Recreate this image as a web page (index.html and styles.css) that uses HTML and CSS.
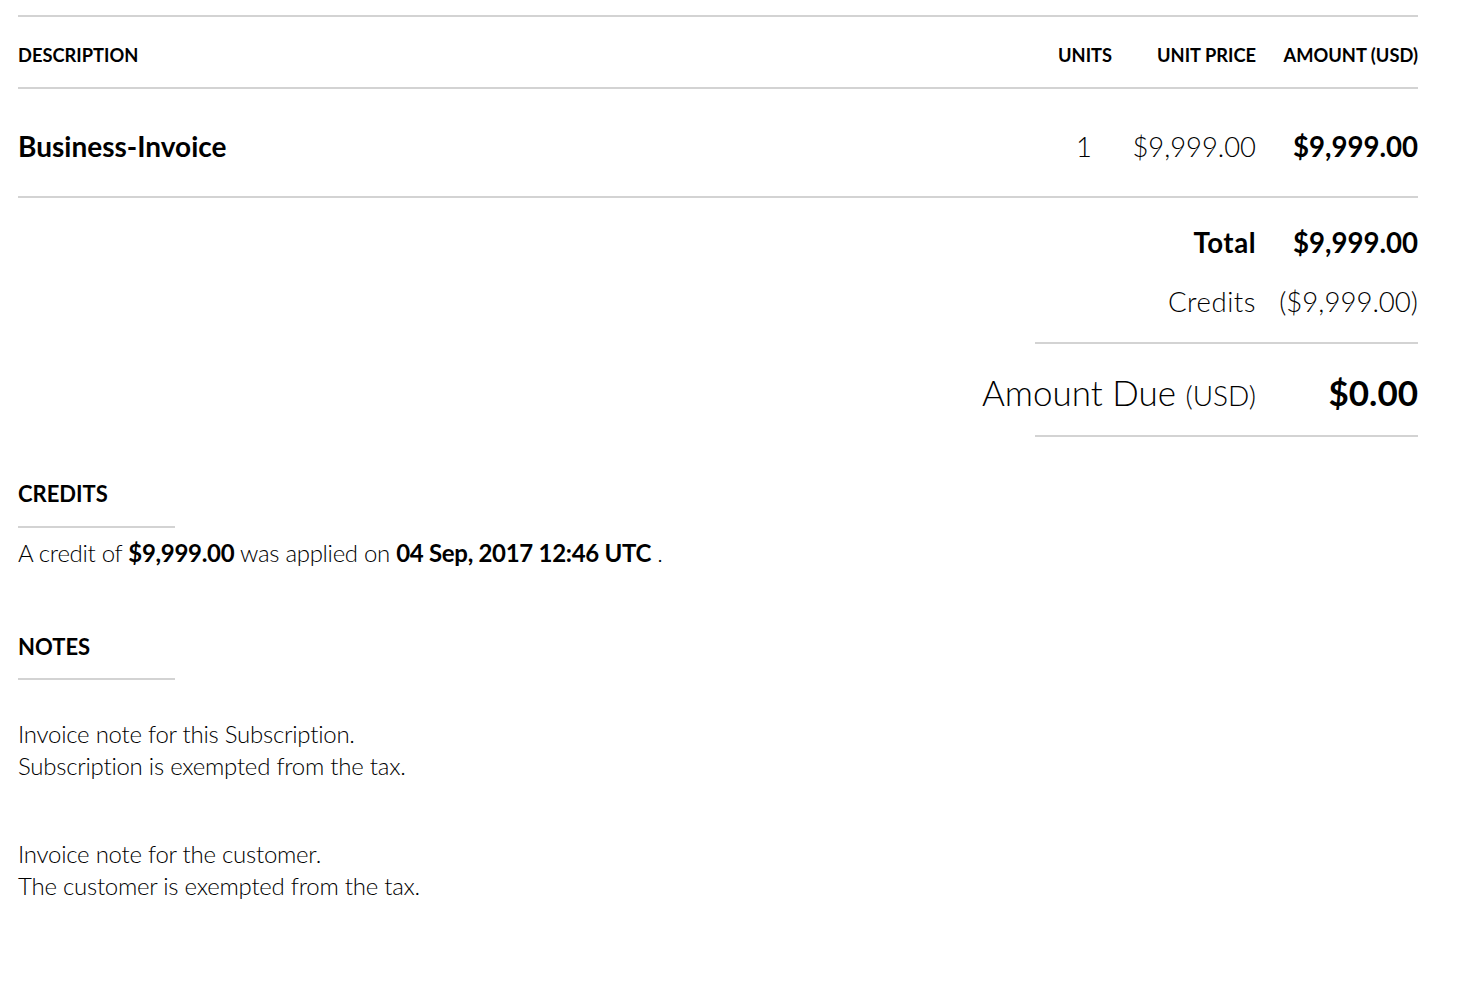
FILE: index.html
```html
<!DOCTYPE html>
<html lang="en">
<head>
<meta charset="utf-8">
<title>Invoice</title>
<link rel="stylesheet" href="styles.css">
</head>
<body>
<div class="invoice">
  <div class="items">
    <div class="items-head">
      <div class="c-desc">Description</div>
      <div class="c-units">Units</div>
      <div class="c-price">Unit Price</div>
      <div class="c-amount">Amount (USD)</div>
    </div>
    <div class="items-row">
      <div class="c-desc item-name">Business-Invoice</div>
      <div class="c-units light">1</div>
      <div class="c-price light">$9,999.00</div>
      <div class="c-amount strong">$9,999.00</div>
    </div>
  </div>

  <div class="totals">
    <div class="tot-row">
      <div class="tot-label strong">Total</div>
      <div class="tot-value strong">$9,999.00</div>
    </div>
    <div class="tot-row">
      <div class="tot-label light">Credits</div>
      <div class="tot-value light">($9,999.00)</div>
    </div>
    <div class="tot-divider"></div>
    <div class="tot-row due-row">
      <div class="tot-label due-label">Amount Due <span class="due-cur">(USD)</span></div>
      <div class="tot-value due-value">$0.00</div>
    </div>
    <div class="tot-divider"></div>
  </div>

  <section class="block credits-block">
    <h2 class="block-title">Credits</h2>
    <p class="credit-line">A credit of <b>$9,999.00</b> was applied on <b>04 Sep, 2017 12:46 UTC</b> .</p>
  </section>

  <section class="block notes-block">
    <h2 class="block-title">Notes</h2>
    <p class="note">Invoice note for this Subscription.<br>Subscription is exempted from the tax.</p>
    <p class="note">Invoice note for the customer.<br>The customer is exempted from the tax.</p>
  </section>
</div>
</body>
</html>
```

FILE: styles.css
```css
html, body {
  margin: 0;
  padding: 0;
  background: #ffffff;
}

body {
  font-family: Lato, "Open Sans", "Liberation Sans", sans-serif;
  color: #000000;
}

.invoice {
  width: 1400px;
  padding: 15px 0 0 18px;
}

.items {
  border-top: 2px solid #d3d3d3;
}

.items-head,
.items-row {
  display: grid;
  grid-template-columns: 1fr 52px 146px 162px;
  align-items: center;
  border-bottom: 2px solid #d3d3d3;
  box-sizing: border-box;
}

.items-head {
  height: 72px;
  padding-top: 6px;
  font-weight: 700;
  font-size: 18.3px;
  text-transform: uppercase;
}

.items-row {
  height: 109px;
  padding-top: 7px;
  font-size: 27.4px;
}

.c-desc { text-align: left; }
.c-units { text-align: center; }
.c-price { text-align: right; }
.c-amount { text-align: right; }

.item-name {
  font-weight: 700;
  font-size: 28px;
}

.items-row .c-amount { font-size: 27.6px; }

.light { font-weight: 300; }
.strong { font-weight: 700; }

.totals {
  display: flex;
  flex-direction: column;
  align-items: flex-end;
  padding-top: 15px;
}

.tot-row {
  display: flex;
  align-items: center;
  height: 59px;
  font-size: 27.6px;
}

.tot-label {
  text-align: right;
  letter-spacing: 0.5px;
}

.tot-value {
  width: 162px;
  text-align: right;
}

.tot-divider {
  width: 383px;
  height: 2px;
  background: #d3d3d3;
  margin-top: 11px;
}

.due-row {
  height: 91px;
  padding-top: 4px;
  box-sizing: border-box;
}

.due-label {
  font-weight: 300;
  font-size: 35px;
  letter-spacing: 0;
}

.due-cur {
  font-size: 28px;
}

.due-value {
  font-weight: 700;
  font-size: 35px;
}

.due-row + .tot-divider { margin-top: 0; }

.block {
  width: 100%;
}

.block-title {
  display: inline-block;
  margin: 0;
  width: 157px;
  font-size: 22px;
  line-height: 30px;
  font-weight: 700;
  text-transform: uppercase;
  padding-bottom: 17px;
  border-bottom: 2px solid #d3d3d3;
}

.credits-block {
  margin-top: 42px;
}

.credit-line {
  margin: 9px 0 0;
  font-size: 24px;
  line-height: 32px;
  font-weight: 300;
  letter-spacing: -0.3px;
}

.credit-line b {
  font-weight: 700;
}

.notes-block {
  margin-top: 63px;
}

.notes-block .block-title {
  padding-bottom: 16px;
}

.note {
  margin: 38px 0 0;
  font-size: 24px;
  line-height: 32px;
  font-weight: 300;
  letter-spacing: -0.25px;
}

.note + .note {
  margin-top: 56px;
}
```
